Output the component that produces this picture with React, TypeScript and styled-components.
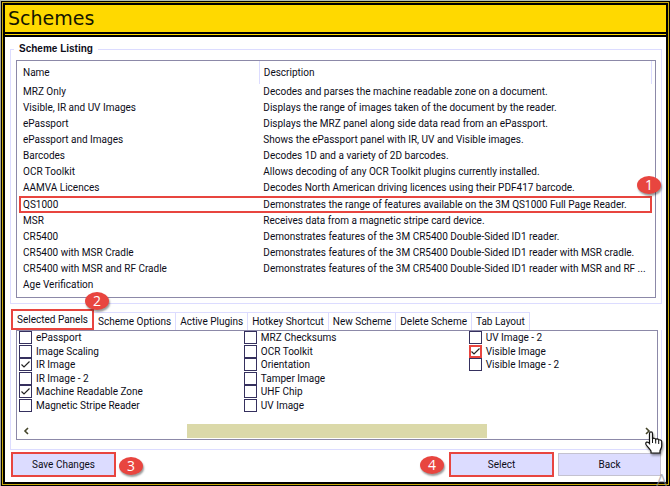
import React from 'react';
import styled, { createGlobalStyle } from 'styled-components';

const red = '#e8453f';
const lavender = '#dcdcff';
const slate = '#8c89a8';

const GlobalStyle = createGlobalStyle`
  *, *::before, *::after { box-sizing: border-box; }
  body { margin: 0; background: #000; }
  button, input, table { font: inherit; color: inherit; }
  button { margin: 0; padding: 0; border: 0; background: none; }
`;

const Frame = styled.div`
  min-height: 100vh;
  display: flex;
  flex-direction: column;
  padding: 1px;
  border-top: 1px solid #b4c0b8;
  border-left: 1px solid #a8a8a0;
  background: #000;
  font: 10px/16px Roboto, "Liberation Sans", Arial, sans-serif;
  color: #0c0c18;
  overflow: hidden;
`;

const GoldRim = styled.div`
  flex: 1;
  display: flex;
  flex-direction: column;
  border: 1px solid #c9a90a;
  padding: 2px;
`;

const TitleBar = styled.h1`
  height: 27px;
  margin: 0;
  padding: 0 3px;
  background: #ffd900;
  font: 19px/27px "DejaVu Sans", Verdana, sans-serif;
  color: #151500;
`;

const TitleRule = styled.div`
  height: 5px;
  border: solid #000;
  border-width: 2px 0;
  background: #ffd900;
`;

const Content = styled.main`
  position: relative;
  flex: 1;
  display: flex;
  flex-direction: column;
  padding: 4px 4px 3px 5px;
  background: #fff;
`;

const Listing = styled.fieldset`
  min-width: 0;
  margin: 0 0 5px;
  padding: 3px 5px 5px;
  border: 1px solid ${lavender};
`;

const Legend = styled.legend`
  margin-left: -2px;
  padding: 0 5px;
  font: bold 10px/16px "Liberation Sans", Arial, sans-serif;
`;

const ListBox = styled.div`
  height: 238px;
  padding: 0 3px 0 2px;
  border: 1px solid ${slate};
`;

const Table = styled.table`
  width: 100%;
  table-layout: fixed;
  border-collapse: collapse;
`;

const NameCol = styled.col`
  width: 38%;
`;

const HeadCell = styled.th`
  height: 23px;
  padding: 1px 4px 0;
  border-right: 1px solid ${lavender};
  font-weight: normal;
  text-align: left;
`;

const Row = styled.tr<{ $selected?: boolean }>`
  height: ${p => (p.$selected ? 17 : 16)}px;
  ${p => p.$selected && `outline: 2px solid ${red}; outline-offset: -2px;`}
`;

const Cell = styled.td`
  padding: 0 4px;
  line-height: 16px;
  white-space: nowrap;
  overflow: hidden;
  text-overflow: ellipsis;
`;

const Tabs = styled.div`
  display: flex;
  align-items: flex-end;
  height: 21px;
  margin-left: 1px;
`;

const Tab = styled.button<{ $active?: boolean }>`
  height: 18px;
  padding: 0 4px;
  border: solid ${lavender};
  border-width: 1px 1px 0 0;
  line-height: 17px;
  white-space: nowrap;
  ${p => p.$active && `
    height: 21px;
    border: 2px solid ${red};
    line-height: 16px;
  `}
`;

const TabPane = styled.section`
  padding: 0 3px 9px 5px;
  border: 1px solid ${lavender};
  border-top: 0;
`;

const PanelBox = styled.div`
  padding: 0 2px 1px;
  border: 1px solid ${slate};
`;

const PanelGrid = styled.div`
  display: grid;
  height: 81px;
  grid-auto-flow: column;
  grid-template-rows: repeat(6, 1fr);
  grid-template-columns: 35fr 35fr 29fr;
`;

const Option = styled.label`
  display: flex;
  align-items: center;
  gap: 4px;
  line-height: 13px;
`;

const Check = styled.input<{ $marked?: boolean }>`
  appearance: none;
  width: 13px;
  height: 13px;
  margin: 0;
  border: ${p => (p.$marked ? `2px solid ${red}` : '1px solid #35305e')};
  background: #fff;
  &:checked {
    background: #fff url("data:image/svg+xml,%3Csvg xmlns='http://www.w3.org/2000/svg' viewBox='0 0 11 11'%3E%3Cpath d='M1.5 5.5 4 8 9.5 2.5' fill='none' stroke='%23222' stroke-width='1.2'/%3E%3C/svg%3E") center / 11px 11px no-repeat;
  }
`;

const ScrollBar = styled.div`
  display: flex;
  justify-content: space-between;
  height: 14px;
  margin-top: 12px;
`;

const Arrow = styled.button`
  display: grid;
  place-items: center;
  width: 15px;
`;

const Track = styled.div`
  flex: 1;
  padding: 0 24%;
`;

const Thumb = styled.div`
  height: 100%;
  background: #dbd9a9;
`;

const Actions = styled.footer`
  display: flex;
  align-items: center;
  gap: 4px;
  margin: 2px 1px 0;
`;

const Action = styled.button<{ $marked?: boolean }>`
  width: 103px;
  height: 23px;
  border: 1px solid #c4c2d0;
  background: ${lavender};
  ${p => p.$marked && `
    width: 105px;
    height: 25px;
    border: 2px solid ${red};
  `}
`;

const Spacer = styled.div`
  flex: 1;
`;

const badgeSpots = {
  row: 'right: 5px; top: 139px;',
  tab: 'left: 80px; top: 255px;',
  save: 'left: 114px; bottom: 7px;',
  select: 'right: 222px; bottom: 8px;',
};

const Badge = styled.span<{ $spot: keyof typeof badgeSpots }>`
  position: absolute;
  ${p => badgeSpots[p.$spot]}
  width: 24px;
  height: 18px;
  border-radius: 50%;
  background: ${red};
  box-shadow: 1px 2px 2px rgba(0, 0, 0, 0.4);
  color: #fff;
  font: 14px/18px "Open Sans", sans-serif;
  text-align: center;
`;

const Pointer = styled.svg`
  position: absolute;
  right: 3px;
  bottom: 28px;
  filter: drop-shadow(1px 2px 1px rgba(0, 0, 0, 0.4));
`;

const Watermark = styled.span`
  position: absolute;
  right: -1px;
  bottom: -8px;
  font: 17px/20px "Open Sans", sans-serif;
  color: rgba(145, 145, 155, 0.7);
`;

const schemes: [string, string][] = [
  ['MRZ Only', 'Decodes and parses the machine readable zone on a document.'],
  ['Visible, IR and UV Images', 'Displays the range of images taken of the document by the reader.'],
  ['ePassport', 'Displays the MRZ panel along side data read from an ePassport.'],
  ['ePassport and Images', 'Shows the ePassport panel with IR, UV and Visible images.'],
  ['Barcodes', 'Decodes 1D and a variety of 2D barcodes.'],
  ['OCR Toolkit', 'Allows decoding of any OCR Toolkit plugins currently installed.'],
  ['AAMVA Licences', 'Decodes North American driving licences using their PDF417 barcode.'],
  ['QS1000', 'Demonstrates the range of features available on the 3M QS1000 Full Page Reader.'],
  ['MSR', 'Receives data from a magnetic stripe card device.'],
  ['CR5400', 'Demonstrates features of the 3M CR5400 Double-Sided ID1 reader.'],
  ['CR5400 with MSR Cradle', 'Demonstrates features of the 3M CR5400 Double-Sided ID1 reader with MSR cradle.'],
  ['CR5400 with MSR and RF Cradle', 'Demonstrates features of the 3M CR5400 Double-Sided ID1 reader with MSR and RF ...'],
  ['Age Verification', ''],
];

const tabs = ['Selected Panels', 'Scheme Options', 'Active Plugins', 'Hotkey Shortcut', 'New Scheme', 'Delete Scheme', 'Tab Layout'];

const panels = [
  'ePassport', 'Image Scaling', 'IR Image', 'IR Image - 2', 'Machine Readable Zone', 'Magnetic Stripe Reader',
  'MRZ Checksums', 'OCR Toolkit', 'Orientation', 'Tamper Image', 'UHF Chip', 'UV Image',
  'UV Image - 2', 'Visible Image', 'Visible Image - 2',
];
const enabled = ['IR Image', 'Machine Readable Zone', 'Visible Image'];

const Chevron = ({ d }: { d: string }) => (
  <svg width="7" height="8" viewBox="0 0 7 8" fill="none" stroke="#45452a" strokeWidth="1.6">
    <path d={d} />
  </svg>
);

export default function App() {
  return (
    <Frame>
      <GlobalStyle />
      <GoldRim>
        <TitleBar>Schemes</TitleBar>
        <TitleRule />
        <Content>
          <Listing>
            <Legend>Scheme Listing</Legend>
            <ListBox>
              <Table>
                <colgroup><NameCol /><col /></colgroup>
                <thead>
                  <tr><HeadCell>Name</HeadCell><HeadCell>Description</HeadCell></tr>
                </thead>
                <tbody>
                  {schemes.map(([name, text]) => (
                    <Row key={name} $selected={name === 'QS1000'}>
                      <Cell>{name}</Cell>
                      <Cell>{text}</Cell>
                    </Row>
                  ))}
                </tbody>
              </Table>
            </ListBox>
          </Listing>
          <Tabs role="tablist">
            {tabs.map((t, i) => (
              <Tab key={t} role="tab" aria-selected={i === 0} $active={i === 0}>{t}</Tab>
            ))}
          </Tabs>
          <TabPane role="tabpanel">
            <PanelBox>
              <PanelGrid>
                {panels.map(p => (
                  <Option key={p}>
                    <Check type="checkbox" defaultChecked={enabled.includes(p)} $marked={p === 'Visible Image'} />
                    {p}
                  </Option>
                ))}
              </PanelGrid>
              <ScrollBar>
                <Arrow aria-label="Scroll left"><Chevron d="M5 1 2 4 5 7" /></Arrow>
                <Track><Thumb /></Track>
                <Arrow aria-label="Scroll right"><Chevron d="M2 1 5 4 2 7" /></Arrow>
              </ScrollBar>
            </PanelBox>
          </TabPane>
          <Actions>
            <Action $marked>Save Changes</Action>
            <Spacer />
            <Action $marked>Select</Action>
            <Action>Back</Action>
          </Actions>
          <Badge $spot="row">1</Badge>
          <Badge $spot="tab">2</Badge>
          <Badge $spot="save">3</Badge>
          <Badge $spot="select">4</Badge>
          <Pointer width="18" height="23" viewBox="0 0 18 23" aria-hidden="true">
            <path
              d="M4.500 12.500V2.500C4.500 .3 7.500 .3 7.500 2.500V8c.5-1.200 2.800-1 3.200.5.6-1 2.700-.7 3 .7.8-.8 3-.3 3 1.300V15c0 2.500-1.700 3.500-1.700 5v2H6v-2C5 18 2.500 16 1 13.500 0 11 2.500 10 4.500 12.500Z"
              fill="#fff" stroke="#111" strokeWidth="1.200"
            />
            <path d="M7.500 8v4M10.700 9v3.500M13.700 10v3" fill="none" stroke="#111" />
          </Pointer>
          <Watermark aria-hidden="true">A</Watermark>
        </Content>
      </GoldRim>
    </Frame>
  );
}
